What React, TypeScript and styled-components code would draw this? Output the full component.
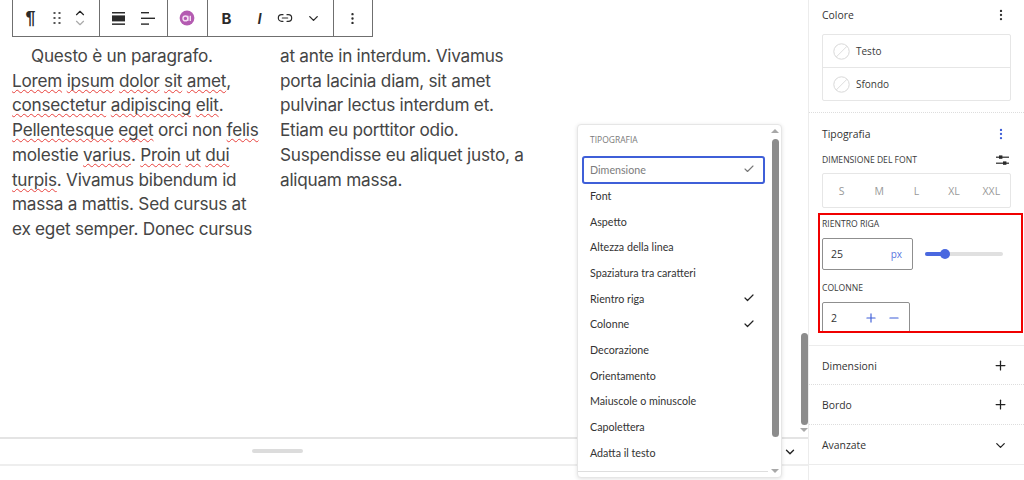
import React from "react";
import styled, { createGlobalStyle } from "styled-components";
import { Check, ChevronDown, ChevronUp, Link2, Minus, MoreVertical, Plus } from "lucide-react";

const GlobalStyle = createGlobalStyle`
  html, body { margin: 0; padding: 0; background: #fff; }
  body { font-family: "Open Sans", "Liberation Sans", sans-serif; color: #2f2f2f; }
  #root { width: 1024px; height: 480px; overflow: hidden; }
`;

const Page = styled.div`
  position: relative;
  display: flex;
  width: 1024px;
  height: 480px;
  overflow: hidden;
  background: #fff;
`;

const Main = styled.div`
  width: 808px;
  height: 480px;
  display: flex;
  flex-direction: column;
`;

const EditorRow = styled.div`
  flex: 1;
  display: flex;
  min-height: 0;
`;

const Canvas = styled.div`
  flex: 1;
  padding-left: 12px;
`;

const Toolbar = styled.div`
  display: flex;
  width: 361px;
  height: 37px;
  box-sizing: border-box;
  border: 1px solid #6f6f6f;
  border-top: 0;
`;

const ToolGroup = styled.div<{ $w: number }>`
  display: flex;
  align-items: center;
  width: ${(p) => p.$w}px;
  flex: none;
  box-sizing: border-box;
  border-right: 1px solid #6f6f6f;
  &:last-child { border-right: 0; }
`;

const ToolSlot = styled.span<{ $w: number }>`
  display: flex;
  align-items: center;
  justify-content: center;
  width: ${(p) => p.$w}px;
  flex: none;
  color: #2a2a2a;
  font-family: "Liberation Sans", sans-serif;
  font-size: 18px;
`;

const Pilcrow = styled.b`
  font-size: 18px;
  margin-right: 1px;
`;

const Bold = styled.b`
  font-family: "Inter", sans-serif;
  font-size: 15px;
`;

const Italic = styled.i`
  font-family: "Inter", sans-serif;
  font-weight: 600;
  font-size: 15px;
`;

const Mover = styled.span`
  display: flex;
  flex-direction: column;
  align-items: center;
  gap: 0;
`;

const Article = styled.div`
  width: 515px;
  height: 200px;
  margin-top: 7px;
  column-count: 2;
  column-gap: 21px;
  column-fill: auto;
  font-family: "Inter", "Open Sans", sans-serif;
  font-size: 17.2px;
  line-height: 24.7px;
  letter-spacing: -0.25px;
  color: #454545;
  text-indent: 19px;
`;

const Typo = styled.span`
  text-decoration: underline wavy #e8413c 1px;
  text-underline-offset: 2px;
  text-decoration-skip-ink: none;
`;

const ScrollTrack = styled.div`
  position: relative;
  width: 8px;
  display: flex;
  flex-direction: column;
  justify-content: flex-end;
  align-items: center;
  padding-bottom: 5px;
`;

const ScrollThumb = styled.div<{ $h: number; $mb: number }>`
  width: 7px;
  height: ${(p) => p.$h}px;
  margin-bottom: ${(p) => p.$mb}px;
  border-radius: 4px;
  background: #8c8c8c;
`;

const ArrowDown = styled.span`
  width: 0;
  height: 0;
  border-left: 4px solid transparent;
  border-right: 4px solid transparent;
  border-top: 4px solid #a8a8a8;
`;

const ArrowUp = styled.span`
  width: 0;
  height: 0;
  border-left: 4px solid transparent;
  border-right: 4px solid transparent;
  border-bottom: 4px solid #a8a8a8;
`;

const BottomBar = styled.div`
  height: 25px;
  flex: none;
  display: flex;
  align-items: center;
  justify-content: flex-end;
  position: relative;
  padding-right: 11px;
  border-top: 2px solid #e4e4e4;
  border-bottom: 2px solid #eeeeee;
  color: #222;
`;

const Handle = styled.span`
  position: absolute;
  left: 252px;
  top: 10px;
  width: 51px;
  height: 4px;
  border-radius: 2px;
  background: #dcdcdc;
`;

const Footer = styled.div`
  height: 14px;
  flex: none;
`;

const Popover = styled.div`
  position: absolute;
  left: 577px;
  top: 124px;
  width: 205px;
  height: 354px;
  box-sizing: border-box;
  display: flex;
  background: #fff;
  border: 1px solid #e6e6e6;
  border-radius: 4px;
  box-shadow: 0 1px 4px rgba(0, 0, 0, 0.12);
`;

const PopoverBody = styled.div`
  flex: 1;
  padding: 9px 0 0 4px;
  min-width: 0;
`;

const PopoverTitle = styled.div`
  font-size: 8.5px;
  line-height: 12px;
  color: #7a7a7a;
  padding-left: 8px;
  margin-bottom: 10px;
`;

const MenuItem = styled.div<{ $active?: boolean }>`
  display: flex;
  align-items: center;
  justify-content: space-between;
  box-sizing: border-box;
  width: 183px;
  height: ${(p) => (p.$active ? 28 : 25.7)}px;
  margin-bottom: ${(p) => (p.$active ? -1.5 : 0)}px;
  padding: 0 10px 0 8px;
  font-family: "Lato", "Open Sans", sans-serif;
  font-size: 10.7px;
  color: ${(p) => (p.$active ? "#7c7c7c" : "#333")};
  border: ${(p) => (p.$active ? "2px solid #3f5fd8" : "0")};
  border-radius: 3px;
  ${(p) => (p.$active ? "padding: 0 8px 2px 6px;" : "")}
`;

const PopoverScroll = styled.div`
  width: 12px;
  display: flex;
  flex-direction: column;
  align-items: center;
  padding-top: 4px;
  box-sizing: border-box;
`;

const PopoverThumb = styled.div`
  width: 7px;
  height: 298px;
  margin-top: 6px;
  border-radius: 4px;
  background: #8c8c8c;
`;

const PopoverArrowWrap = styled.div`
  margin-top: auto;
  margin-bottom: 4px;
  display: flex;
`;

const PopoverRule = styled.div`
  position: absolute;
  left: 0;
  right: 13px;
  bottom: 5px;
  height: 1px;
  background: #dedede;
`;

const Sidebar = styled.aside`
  width: 216px;
  height: 480px;
  box-sizing: border-box;
  border-left: 1px solid #ececec;
  display: flex;
  flex-direction: column;
`;

const Section = styled.section<{ $h: number; $solid?: boolean }>`
  height: ${(p) => p.$h}px;
  flex: none;
  box-sizing: border-box;
  padding: 0 13px 0 13px;
  border-bottom: 1px ${(p) => (p.$solid ? "solid #ececec" : "dotted #dddddd")};
`;

const SectionHead = styled.div<{ $h?: number }>`
  display: flex;
  align-items: center;
  justify-content: space-between;
  height: ${(p) => p.$h ?? 31}px;
  font-size: 10.4px;
  color: #333;
  svg { margin-right: 3px; }
`;

const ColorPanel = styled.div`
  margin-top: 4px;
  border: 1px solid #e6e6e6;
  border-radius: 2px;
`;

const ColorRow = styled.div`
  display: flex;
  align-items: center;
  gap: 6px;
  height: 32px;
  padding-left: 10px;
  font-size: 10px;
  color: #3a3a3a;
  & + & { border-top: 1px solid #e6e6e6; }
`;

const Label = styled.div`
  font-size: 8.6px;
  line-height: 12px;
  color: #3a3a3a;
`;

const LabelRow = styled.div`
  display: flex;
  align-items: center;
  justify-content: space-between;
  height: 12px;
  margin-top: -1px;
  padding-right: 2px;
`;

const SizePanel = styled.div`
  display: flex;
  align-items: center;
  height: 33px;
  margin-top: 7px;
  border: 1px solid #e6e6e6;
  border-radius: 2px;
  color: #999;
  font-size: 10.5px;
`;

const SizeOption = styled.span`
  flex: 1;
  text-align: center;
`;

const Highlight = styled.div`
  width: 205px;
  height: 120px;
  margin: 5px 0 0 -4px;
  box-sizing: border-box;
  border: 2px solid #f00000;
  padding: 3px 0 0 2px;
  overflow: hidden;
`;

const ControlRow = styled.div<{ $mt: number }>`
  display: flex;
  align-items: center;
  gap: 12px;
  margin-top: ${(p) => p.$mt}px;
  margin-bottom: 12px;
`;

const InputBox = styled.div<{ $w: number }>`
  display: flex;
  align-items: center;
  box-sizing: border-box;
  width: ${(p) => p.$w}px;
  height: 32px;
  flex: none;
  padding: 0 7px 0 8px;
  border: 1px solid #8f8f8f;
  border-radius: 2px;
  font-size: 10.5px;
  color: #333;
`;

const Unit = styled.span`
  margin-left: auto;
  margin-right: 3px;
  color: #5b76e0;
  font-size: 10px;
`;

const Stepper = styled.span`
  margin-left: auto;
  margin-right: 1px;
  display: flex;
  gap: 9px;
  color: #3f5fd8;
`;

const Slider = styled.div`
  position: relative;
  width: 78px;
  height: 4px;
  border-radius: 2px;
  background: #e0e0e0;
`;

const SliderFill = styled.div`
  height: 100%;
  border-radius: 2px;
  background: #4a68e0;
`;

const SliderKnob = styled.span`
  position: absolute;
  top: -3px;
  width: 10px;
  height: 10px;
  margin-left: -5px;
  border-radius: 50%;
  background: #4a68e0;
`;

const Swatch = () => (
  <svg width="17" height="17" viewBox="0 0 17 17" fill="none">
    <circle cx="8.5" cy="8.5" r="7.7" stroke="#d8d8d8" />
    <path d="M3.2 14 14 3.2" stroke="#dedede" />
  </svg>
);

const DragIcon = () => (
  <svg width="10" height="14" viewBox="0 0 10 14" fill="#555">
    {[1, 6, 11].map((y) => (
      <React.Fragment key={y}>
        <rect x="1.5" y={y} width="2" height="2" />
        <rect x="6.5" y={y} width="2" height="2" />
      </React.Fragment>
    ))}
  </svg>
);

const AlignWide = () => (
  <svg width="13" height="13" viewBox="0 0 13 13" fill="#2a2a2a">
    <rect x="0" y="0" width="13" height="1.5" />
    <rect x="0" y="3.4" width="13" height="6" />
    <rect x="0" y="11.4" width="13" height="1.5" />
  </svg>
);

const AlignLeft = () => (
  <svg width="14" height="13" viewBox="0 0 14 13" fill="#2a2a2a">
    <rect x="0" y="0" width="8" height="1.4" />
    <rect x="0" y="5.6" width="14" height="1.4" />
    <rect x="0" y="11.4" width="8" height="1.4" />
  </svg>
);

const AiLogo = () => (
  <svg width="16" height="16" viewBox="0 0 16 16">
    <circle cx="8" cy="8" r="7.4" fill="#b45bb1" />
    <circle cx="6.4" cy="8.4" r="2.4" fill="none" stroke="#f3dff2" strokeWidth="1.4" />
    <path d="M8.8 5.8v5.2M11.3 5.8v5.2" stroke="#f3dff2" strokeWidth="1.4" />
  </svg>
);

const SlidersIcon = () => (
  <svg width="13" height="11" viewBox="0 0 13 11" fill="#2a2a2a">
    <rect x="0" y="1.6" width="13" height="1.2" />
    <rect x="3" y="0.4" width="3.4" height="3.4" />
    <rect x="0" y="7.6" width="13" height="1.2" />
    <rect x="7" y="6.4" width="3.4" height="3.4" />
  </svg>
);

const menuItems: { label: string; checked?: boolean }[] = [
  { label: "Font" },
  { label: "Aspetto" },
  { label: "Altezza della linea" },
  { label: "Spaziatura tra caratteri" },
  { label: "Rientro riga", checked: true },
  { label: "Colonne", checked: true },
  { label: "Decorazione" },
  { label: "Orientamento" },
  { label: "Maiuscole o minuscole" },
  { label: "Capolettera" },
  { label: "Adatta il testo" },
];

export default function App() {
  return (
    <Page>
      <GlobalStyle />
      <Main>
        <EditorRow>
          <Canvas>
            <Toolbar>
              <ToolGroup $w={87}>
                <ToolSlot $w={36}><Pilcrow>¶</Pilcrow></ToolSlot>
                <ToolSlot $w={16}><DragIcon /></ToolSlot>
                <ToolSlot $w={30}>
                  <Mover>
                    <ChevronUp size={14} color="#222" style={{ marginBottom: -3 }} />
                    <ChevronDown size={14} color="#aaa" style={{ marginTop: -1 }} />
                  </Mover>
                </ToolSlot>
              </ToolGroup>
              <ToolGroup $w={68}>
                <ToolSlot $w={37}><AlignWide /></ToolSlot>
                <ToolSlot $w={21}><AlignLeft /></ToolSlot>
              </ToolGroup>
              <ToolGroup $w={40}>
                <ToolSlot $w={38}><AiLogo /></ToolSlot>
              </ToolGroup>
              <ToolGroup $w={126}>
                <ToolSlot $w={37}><Bold>B</Bold></ToolSlot>
                <ToolSlot $w={29}><Italic>I</Italic></ToolSlot>
                <ToolSlot $w={22}><Link2 size={16} strokeWidth={1.8} /></ToolSlot>
                <ToolSlot $w={34}><ChevronDown size={15} strokeWidth={2.2} /></ToolSlot>
              </ToolGroup>
              <ToolGroup $w={38}>
                <ToolSlot $w={37}><MoreVertical size={15} strokeWidth={1.8} /></ToolSlot>
              </ToolGroup>
            </Toolbar>
            <Article>
              Questo è un paragrafo. <Typo>Lorem</Typo> <Typo>ipsum</Typo> <Typo>dolor</Typo> <Typo>sit</Typo>{" "}
              <Typo>amet</Typo>, <Typo>consectetur</Typo> <Typo>adipiscing</Typo> <Typo>elit</Typo>.{" "}
              <Typo>Pellentesque</Typo> <Typo>eget</Typo> orci non <Typo>felis</Typo> molestie <Typo>varius</Typo>.{" "}
              <Typo>Proin</Typo> <Typo>ut</Typo> <Typo>dui</Typo> <Typo>turpis</Typo>. Vivamus bibendum id massa a
              mattis. Sed cursus at ex eget semper. Donec cursus at ante in interdum. Vivamus porta lacinia diam, sit
              amet pulvinar lectus interdum et. Etiam eu porttitor odio. Suspendisse eu aliquet justo, a aliquam massa.
            </Article>
          </Canvas>
          <ScrollTrack>
            <ScrollThumb $h={92} $mb={3} />
            <ArrowDown />
          </ScrollTrack>
        </EditorRow>
        <BottomBar>
          <Handle />
          <ChevronDown size={14} strokeWidth={2.4} />
        </BottomBar>
        <Footer />
      </Main>
      <Sidebar>
        <Section $h={113}>
          <SectionHead $h={30}>
            Colore
            <MoreVertical size={14} />
          </SectionHead>
          <ColorPanel>
            <ColorRow><Swatch />Testo</ColorRow>
            <ColorRow><Swatch />Sfondo</ColorRow>
          </ColorPanel>
        </Section>
        <Section $h={233} $solid>
          <SectionHead $h={42}>
            Tipografia
            <MoreVertical size={14} color="#3f5fd8" />
          </SectionHead>
          <LabelRow>
            <Label>DIMENSIONE DEL FONT</Label>
            <SlidersIcon />
          </LabelRow>
          <SizePanel>
            <SizeOption>S</SizeOption>
            <SizeOption>M</SizeOption>
            <SizeOption>L</SizeOption>
            <SizeOption>XL</SizeOption>
            <SizeOption>XXL</SizeOption>
          </SizePanel>
          <Highlight>
            <Label>RIENTRO RIGA</Label>
            <ControlRow $mt={8}>
              <InputBox $w={91}>
                25
                <Unit>px</Unit>
              </InputBox>
              <Slider>
                <SliderFill style={{ width: `${(20 / 78) * 100}%` }} />
                <SliderKnob style={{ left: `${(20 / 78) * 100}%` }} />
              </Slider>
            </ControlRow>
            <Label>COLONNE</Label>
            <ControlRow $mt={8}>
              <InputBox $w={88}>
                2
                <Stepper>
                  <Plus size={14} />
                  <Minus size={14} />
                </Stepper>
              </InputBox>
            </ControlRow>
          </Highlight>
        </Section>
        <Section $h={39}>
          <SectionHead $h={39}>
            Dimensioni
            <Plus size={15} color="#222" />
          </SectionHead>
        </Section>
        <Section $h={40}>
          <SectionHead $h={39}>
            Bordo
            <Plus size={15} color="#222" />
          </SectionHead>
        </Section>
        <Section $h={40} $solid>
          <SectionHead $h={40}>
            Avanzate
            <ChevronDown size={15} color="#222" />
          </SectionHead>
        </Section>
      </Sidebar>
      <Popover>
        <PopoverBody>
          <PopoverTitle>TIPOGRAFIA</PopoverTitle>
          <MenuItem $active>
            Dimensione
            <Check size={12} color="#777" strokeWidth={2.2} />
          </MenuItem>
          {menuItems.map((item) => (
            <MenuItem key={item.label}>
              {item.label}
              {item.checked && <Check size={12} color="#222" strokeWidth={2.4} />}
            </MenuItem>
          ))}
        </PopoverBody>
        <PopoverScroll>
          <ArrowUp />
          <PopoverThumb />
          <PopoverArrowWrap><ArrowDown /></PopoverArrowWrap>
        </PopoverScroll>
        <PopoverRule />
      </Popover>
    </Page>
  );
}
